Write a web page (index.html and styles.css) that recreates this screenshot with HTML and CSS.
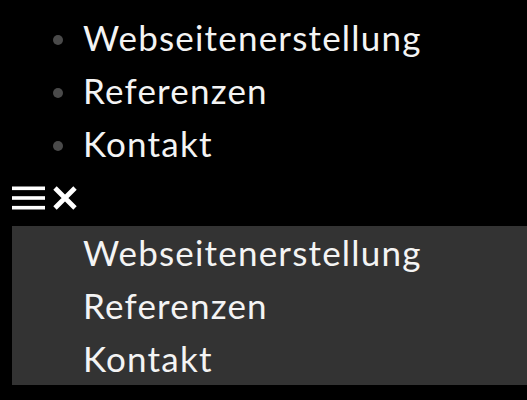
FILE: index.html
```html
<!DOCTYPE html>
<html lang="de">
<head>
<meta charset="utf-8">
<link rel="stylesheet" href="styles.css">
</head>
<body>
<ul class="nav">
  <li>Webseitenerstellung</li>
  <li>Referenzen</li>
  <li>Kontakt</li>
</ul>
<div class="toggle">
  <svg class="burger" width="33" height="24" viewBox="0 0 33 24">
    <rect x="0" y="0.5" width="33" height="3.6" fill="#fff"/>
    <rect x="0" y="10.2" width="33" height="3.6" fill="#fff"/>
    <rect x="0" y="19.9" width="33" height="3.6" fill="#fff"/>
  </svg>
  <svg class="close" width="26" height="24" viewBox="0 0 26 24">
    <path d="M3 2 L23 22 M23 2 L3 22" stroke="#fff" stroke-width="4.8" stroke-linecap="butt"/>
  </svg>
</div>
<ul class="menu">
  <li>Webseitenerstellung</li>
  <li>Referenzen</li>
  <li>Kontakt</li>
</ul>
</body>
</html>
```
FILE: styles.css
```css
html, body {
  margin: 0;
  padding: 0;
  background: #000;
}
body {
  font-family: Lato, "Open Sans", sans-serif;
  font-size: 35px;
  letter-spacing: 1.2px;
  color: #f4f4f4;
  padding-top: 11px;
}
.nav {
  margin: 0;
  padding: 0 0 0 83px;
  list-style: none;
}
.nav li {
  line-height: 53px;
  position: relative;
}
.nav li::before {
  content: "";
  position: absolute;
  left: -30px;
  top: 24px;
  width: 10px;
  height: 10px;
  border-radius: 50%;
  background: #4a4a4a;
}
.toggle {
  height: 56px;
  display: flex;
  align-items: center;
  gap: 7px;
  padding-left: 12px;
}
.burger, .close {
  display: block;
}
.menu {
  margin: 0 0 0 12px;
  padding: 0 0 0 71px;
  list-style: none;
  background: #333;
}
.menu li {
  line-height: 53px;
}
```
